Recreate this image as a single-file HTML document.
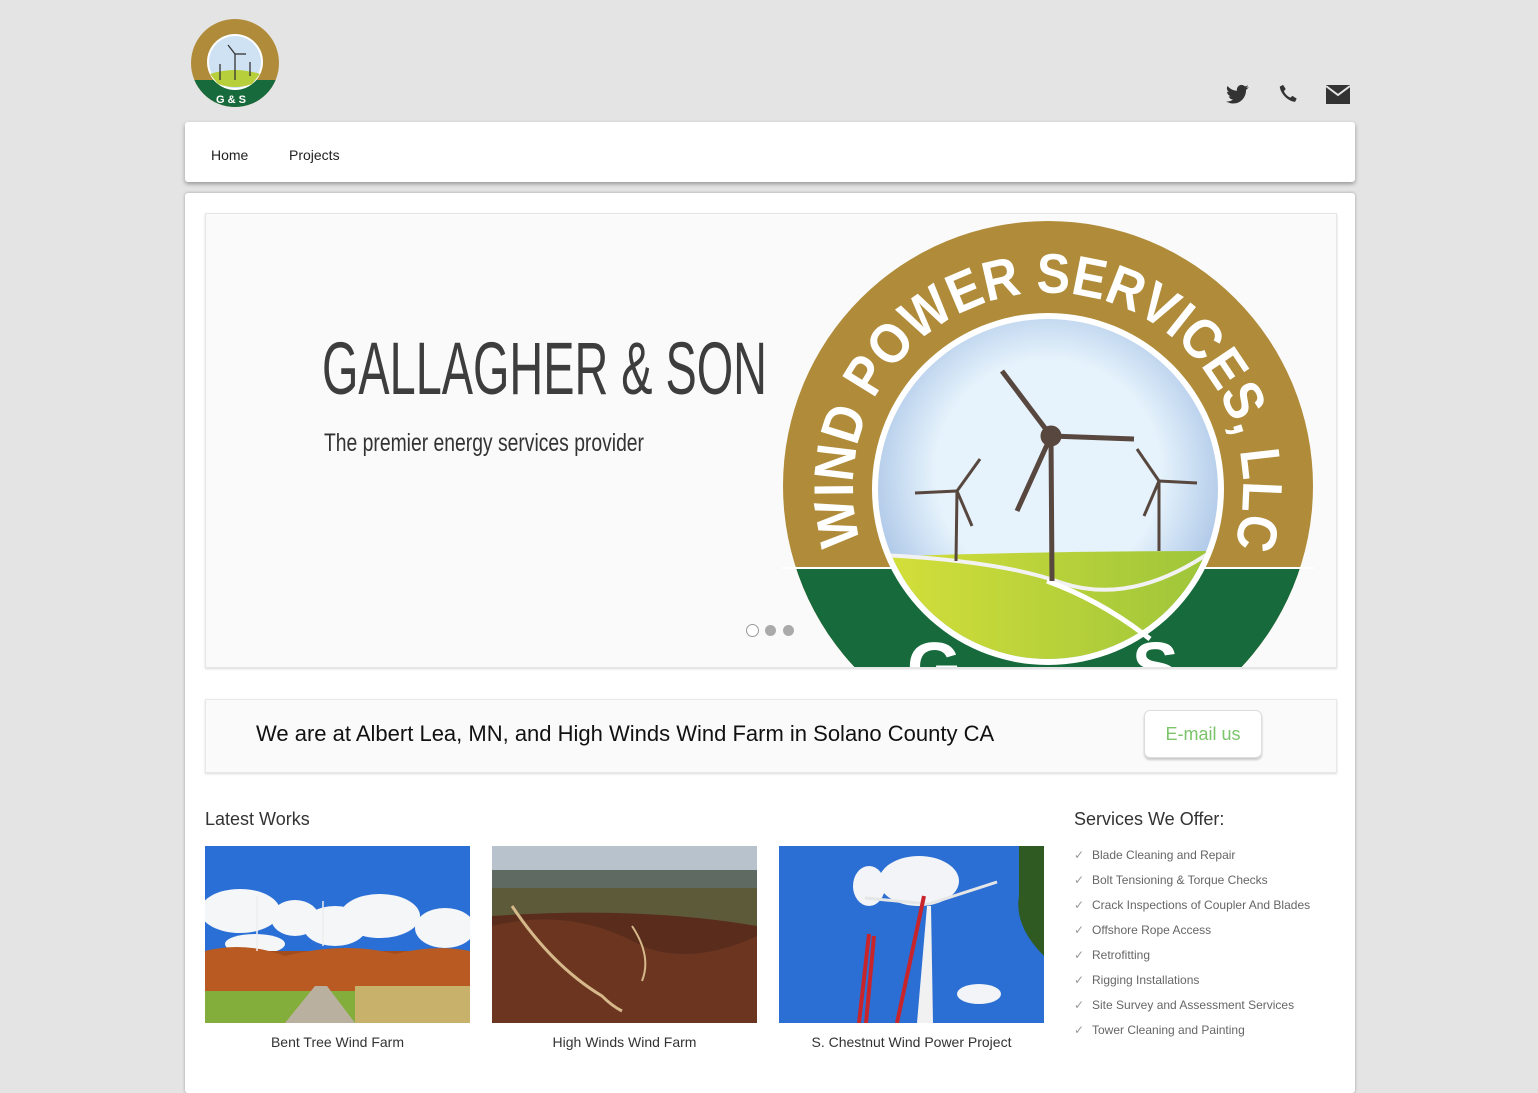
<!DOCTYPE html>
<html><head><meta charset="utf-8"><style>
body{margin:0;width:1538px;height:1048px;overflow:hidden;background:#e4e4e4;font-family:"Liberation Sans",sans-serif;position:relative}
.abs{position:absolute}
.nav{left:185px;top:122px;width:1170px;height:60px;background:#fff;box-shadow:0 2px 4px rgba(0,0,0,.35);border-radius:3px}
.nav span{position:absolute;top:25px;font-size:14px;color:#222}
.main{left:185px;top:193px;width:1170px;height:900px;background:#fff;box-shadow:0 0 3px rgba(0,0,0,.3);border-radius:3px}
.slider{left:205px;top:213px;width:1130px;height:453px;background:#fafafa;border:1px solid #e6e6e6;box-shadow:0 1px 2px rgba(0,0,0,.15);overflow:hidden}
.bar{left:205px;top:699px;width:1130px;height:72px;background:#fafafa;border:1px solid #e8e8e8;box-shadow:0 1px 2px rgba(0,0,0,.15)}
.svc div{font-size:12px;color:#666;height:25px;position:relative;padding-left:18px}
.svc div:before{content:"✓";position:absolute;left:0;color:#999;font-size:12px}
.ph{top:846px;width:265px;height:177px;overflow:hidden}
.cap{top:1034px;width:265px;text-align:center;font-size:14px;color:#333}
</style></head><body>
<svg class="abs" style="left:190px;top:18px" width="90" height="90" viewBox="0 0 90 90">
<circle cx="45" cy="45" r="44" fill="#b08c3a"/><clipPath id="c1"><circle cx="45" cy="45" r="44"/></clipPath>
<rect x="0" y="62" width="90" height="30" fill="#176a3c" clip-path="url(#c1)"/>
<circle cx="45" cy="44" r="28" fill="#fff"/><circle cx="45" cy="44" r="26" fill="#cfe2f4"/>
<path d="M20 56 Q45 48 70 56 L62 66 Q45 72 28 66Z" fill="#b7cf3a"/>
<text x="26" y="85" font-size="11" fill="#fff" font-weight="bold">G &amp; S</text>
<g stroke="#333" stroke-width="1.3"><line x1="45" y1="62" x2="45" y2="36"/><line x1="45" y1="36" x2="38" y2="27"/><line x1="45" y1="36" x2="56" y2="36"/><line x1="30" y1="62" x2="30" y2="46"/><line x1="60" y1="58" x2="60" y2="44"/></g>
</svg>
<svg class="abs" style="left:1226px;top:84px" width="24" height="20" viewBox="0 0 24 20"><path d="M23 3c-1 .5-2 .7-3 .8 1-.6 1.7-1.6 2-2.6-1 .6-2 1-3 1.2A4.7 4.7 0 0 0 11 6.7 13 13 0 0 1 1.5 2 4.7 4.7 0 0 0 3 8.2 4.6 4.6 0 0 1 1 7.6a4.7 4.7 0 0 0 3.7 4.6 4.7 4.7 0 0 1-2 .1 4.7 4.7 0 0 0 4.3 3.2A9.3 9.3 0 0 1 0 17.4 13.2 13.2 0 0 0 7 19.5c8.5 0 13-7 13-13V6c1-.7 1.7-1.6 3-3z" fill="#333"/></svg>
<svg class="abs" style="left:1277px;top:83px" width="22" height="22" viewBox="0 0 24 24"><path d="M6.6 2 9.5 6.5 7.5 9c1.4 3 3.8 5.5 7 7l2.4-2 4.6 3-1.8 3.6C12 20 4 12 3 4Z" fill="#333"/></svg>
<svg class="abs" style="left:1326px;top:85px" width="24" height="19" viewBox="0 0 24 19"><rect width="24" height="19" fill="#333"/><path d="M0 1 12 10 24 1" fill="none" stroke="#e4e4e4" stroke-width="2"/></svg>
<div class="abs nav"><span style="left:26px">Home</span><span style="left:104px">Projects</span></div>
<div class="abs main"></div>
<div class="abs slider">
<svg class="abs" style="left:0;top:0" width="600" height="300">
<text x="116" y="180" font-family="Liberation Sans Narrow,Liberation Sans,sans-serif" font-size="74" fill="#3d3d3d" textLength="445" lengthAdjust="spacingAndGlyphs">GALLAGHER &amp; SON</text>
<text x="118" y="237" font-family="Liberation Sans Narrow,Liberation Sans,sans-serif" font-size="25" fill="#333" textLength="320" lengthAdjust="spacingAndGlyphs">The premier energy services provider</text>
</svg>
<svg class="abs" style="left:576px;top:7px" width="532" height="446" viewBox="0 0 532 446">
<defs><clipPath id="cc"><circle cx="266" cy="265" r="265"/></clipPath>
<path id="arc" d="M79 322 A195 195 0 1 1 453 322"/>
<radialGradient id="sky" cx=".5" cy=".45" r=".55"><stop offset="0.6" stop-color="#e6f3fc"/><stop offset="1" stop-color="#a9c4e6"/></radialGradient>
<linearGradient id="hill" x1="0" y1="0" x2="1" y2="0"><stop offset="0" stop-color="#d6e03a"/><stop offset="1" stop-color="#9cc43a"/></linearGradient></defs>
<circle cx="266" cy="265" r="265" fill="#b08c3a"/>
<rect x="0" y="347" width="532" height="200" fill="#176a3c" clip-path="url(#cc)"/>
<line x1="0" y1="347" x2="532" y2="347" stroke="#fff" stroke-width="2"/>
<text font-size="56" font-weight="bold" fill="#fff" font-family="Liberation Sans" textLength="728" lengthAdjust="spacingAndGlyphs"><textPath href="#arc">WIND POWER SERVICES, LLC</textPath></text>
<text x="125" y="470" font-size="70" font-weight="bold" fill="#fff">G</text>
<text x="350" y="470" font-size="70" font-weight="bold" fill="#fff">S</text>
<circle cx="266" cy="268" r="176" fill="#fff"/>
<circle cx="266" cy="268" r="170" fill="url(#sky)"/>
<clipPath id="ci"><circle cx="266" cy="268" r="170"/></clipPath>
<path d="M90 336 Q260 330 440 330 L440 460 L90 460Z" fill="url(#hill)" clip-path="url(#ci)"/>
<path d="M100 334 Q220 340 280 362 Q350 385 430 330" stroke="#f2f2f2" stroke-width="4" fill="none" clip-path="url(#ci)"/>
<path d="M265 360 Q320 380 368 418" stroke="#fff" stroke-width="5" fill="none"/>
<g stroke="#57473f" stroke-width="5" fill="#57473f"><line x1="269" y1="215" x2="270" y2="360"/><line x1="269" y1="215" x2="220" y2="150"/><line x1="269" y1="215" x2="352" y2="218"/><line x1="269" y1="215" x2="235" y2="290"/><circle cx="269" cy="215" r="8"/>
<g stroke-width="3"><line x1="175" y1="270" x2="174" y2="340"/><line x1="175" y1="270" x2="198" y2="238"/><line x1="175" y1="270" x2="133" y2="272"/><line x1="175" y1="270" x2="190" y2="305"/>
<line x1="377" y1="260" x2="377" y2="330"/><line x1="377" y1="260" x2="355" y2="228"/><line x1="377" y1="260" x2="415" y2="262"/><line x1="377" y1="260" x2="362" y2="295"/></g></g>
</svg>
<div class="abs" style="left:540px;top:410px;width:11px;height:11px;border:1px solid #999;border-radius:50%;background:#fff"></div>
<div class="abs" style="left:559px;top:411px;width:11px;height:11px;border-radius:50%;background:#aaa"></div>
<div class="abs" style="left:577px;top:411px;width:11px;height:11px;border-radius:50%;background:#aaa"></div>
</div>
<div class="abs bar"><div class="abs" style="left:50px;top:21px;font-size:22px;color:#111">We are at Albert Lea, MN, and High Winds Wind Farm in Solano County CA</div>
<div class="abs" style="left:938px;top:10px;width:116px;height:46px;border:1px solid #ddd;border-radius:6px;background:#fff;box-shadow:0 2px 2px rgba(0,0,0,.2);color:#7bc46a;font-size:18px;text-align:center;line-height:46px">E-mail us</div></div>
<div class="abs" style="left:205px;top:809px;font-size:18px;color:#333">Latest Works</div>
<div class="abs" style="left:1074px;top:809px;font-size:18px;color:#333">Services We Offer:</div>
<div class="abs svc" style="left:1074px;top:848px"><div>Blade Cleaning and Repair</div><div>Bolt Tensioning &amp; Torque Checks</div><div>Crack Inspections of Coupler And Blades</div><div>Offshore Rope Access</div><div>Retrofitting</div><div>Rigging Installations</div><div>Site Survey and Assessment Services</div><div>Tower Cleaning and Painting</div></div>
<svg class="abs ph" style="left:205px" viewBox="0 0 265 177">
<rect width="265" height="177" fill="#2a6fd6"/>
<g fill="#f4f6f8"><ellipse cx="35" cy="65" rx="40" ry="22"/><ellipse cx="90" cy="72" rx="24" ry="18"/><ellipse cx="130" cy="80" rx="32" ry="20"/><ellipse cx="175" cy="70" rx="40" ry="22"/><ellipse cx="240" cy="82" rx="30" ry="20"/><ellipse cx="50" cy="98" rx="30" ry="10"/></g>
<rect y="105" width="265" height="40" fill="#a24d1e"/>
<path d="M0 105 Q40 95 80 110 Q140 95 190 108 Q230 98 265 105 L265 145 L0 145Z" fill="#b95a22"/>
<rect y="145" width="265" height="32" fill="#83ae3c"/>
<rect x="150" y="140" width="115" height="37" fill="#c8b16a"/>
<path d="M110 140 L122 140 L150 177 L80 177Z" fill="#b9b0a0"/>
<g stroke="#eee" stroke-width="1.5"><line x1="52" y1="105" x2="52" y2="50"/><line x1="118" y1="100" x2="118" y2="55"/></g>
</svg>
<svg class="abs ph" style="left:492px" viewBox="0 0 265 177">
<rect width="265" height="177" fill="#5a2c1c"/>
<rect width="265" height="30" fill="#b8c2cc"/>
<rect y="24" width="265" height="18" fill="#5e6a62"/>
<path d="M0 42 L265 42 L265 80 Q150 60 0 70Z" fill="#5d5a3a"/>
<path d="M0 80 Q80 60 150 100 Q200 120 265 90 L265 177 L0 177Z" fill="#6b3520"/>
<path d="M20 60 Q60 120 110 150 Q120 160 130 165" stroke="#d6b88a" stroke-width="3" fill="none"/>
<path d="M140 80 Q160 110 150 135" stroke="#d6b88a" stroke-width="2" fill="none"/>
</svg>
<svg class="abs ph" style="left:779px" viewBox="0 0 265 177">
<rect width="265" height="177" fill="#2c6fd4"/>
<g fill="#f2f4f7"><ellipse cx="140" cy="35" rx="40" ry="25"/><ellipse cx="90" cy="40" rx="16" ry="20"/><ellipse cx="200" cy="148" rx="22" ry="10"/></g>
<path d="M240 0 L265 0 L265 110 Q235 80 240 50Z" fill="#2f5a22"/>
<polygon points="138,177 148,60 152,60 154,177" fill="#f1f1f1"/>
<line x1="150" y1="58" x2="218" y2="36" stroke="#e6e6e6" stroke-width="3"/><line x1="150" y1="58" x2="86" y2="52" stroke="#e6e6e6" stroke-width="3"/>
<g stroke="#c7252b" stroke-width="4" fill="none"><line x1="118" y1="177" x2="145" y2="50"/><line x1="87" y1="177" x2="95" y2="90"/><line x1="80" y1="177" x2="90" y2="88"/></g>
</svg>
<div class="abs cap" style="left:205px">Bent Tree Wind Farm</div>
<div class="abs cap" style="left:492px">High Winds Wind Farm</div>
<div class="abs cap" style="left:779px">S. Chestnut Wind Power Project</div>
</body></html>
